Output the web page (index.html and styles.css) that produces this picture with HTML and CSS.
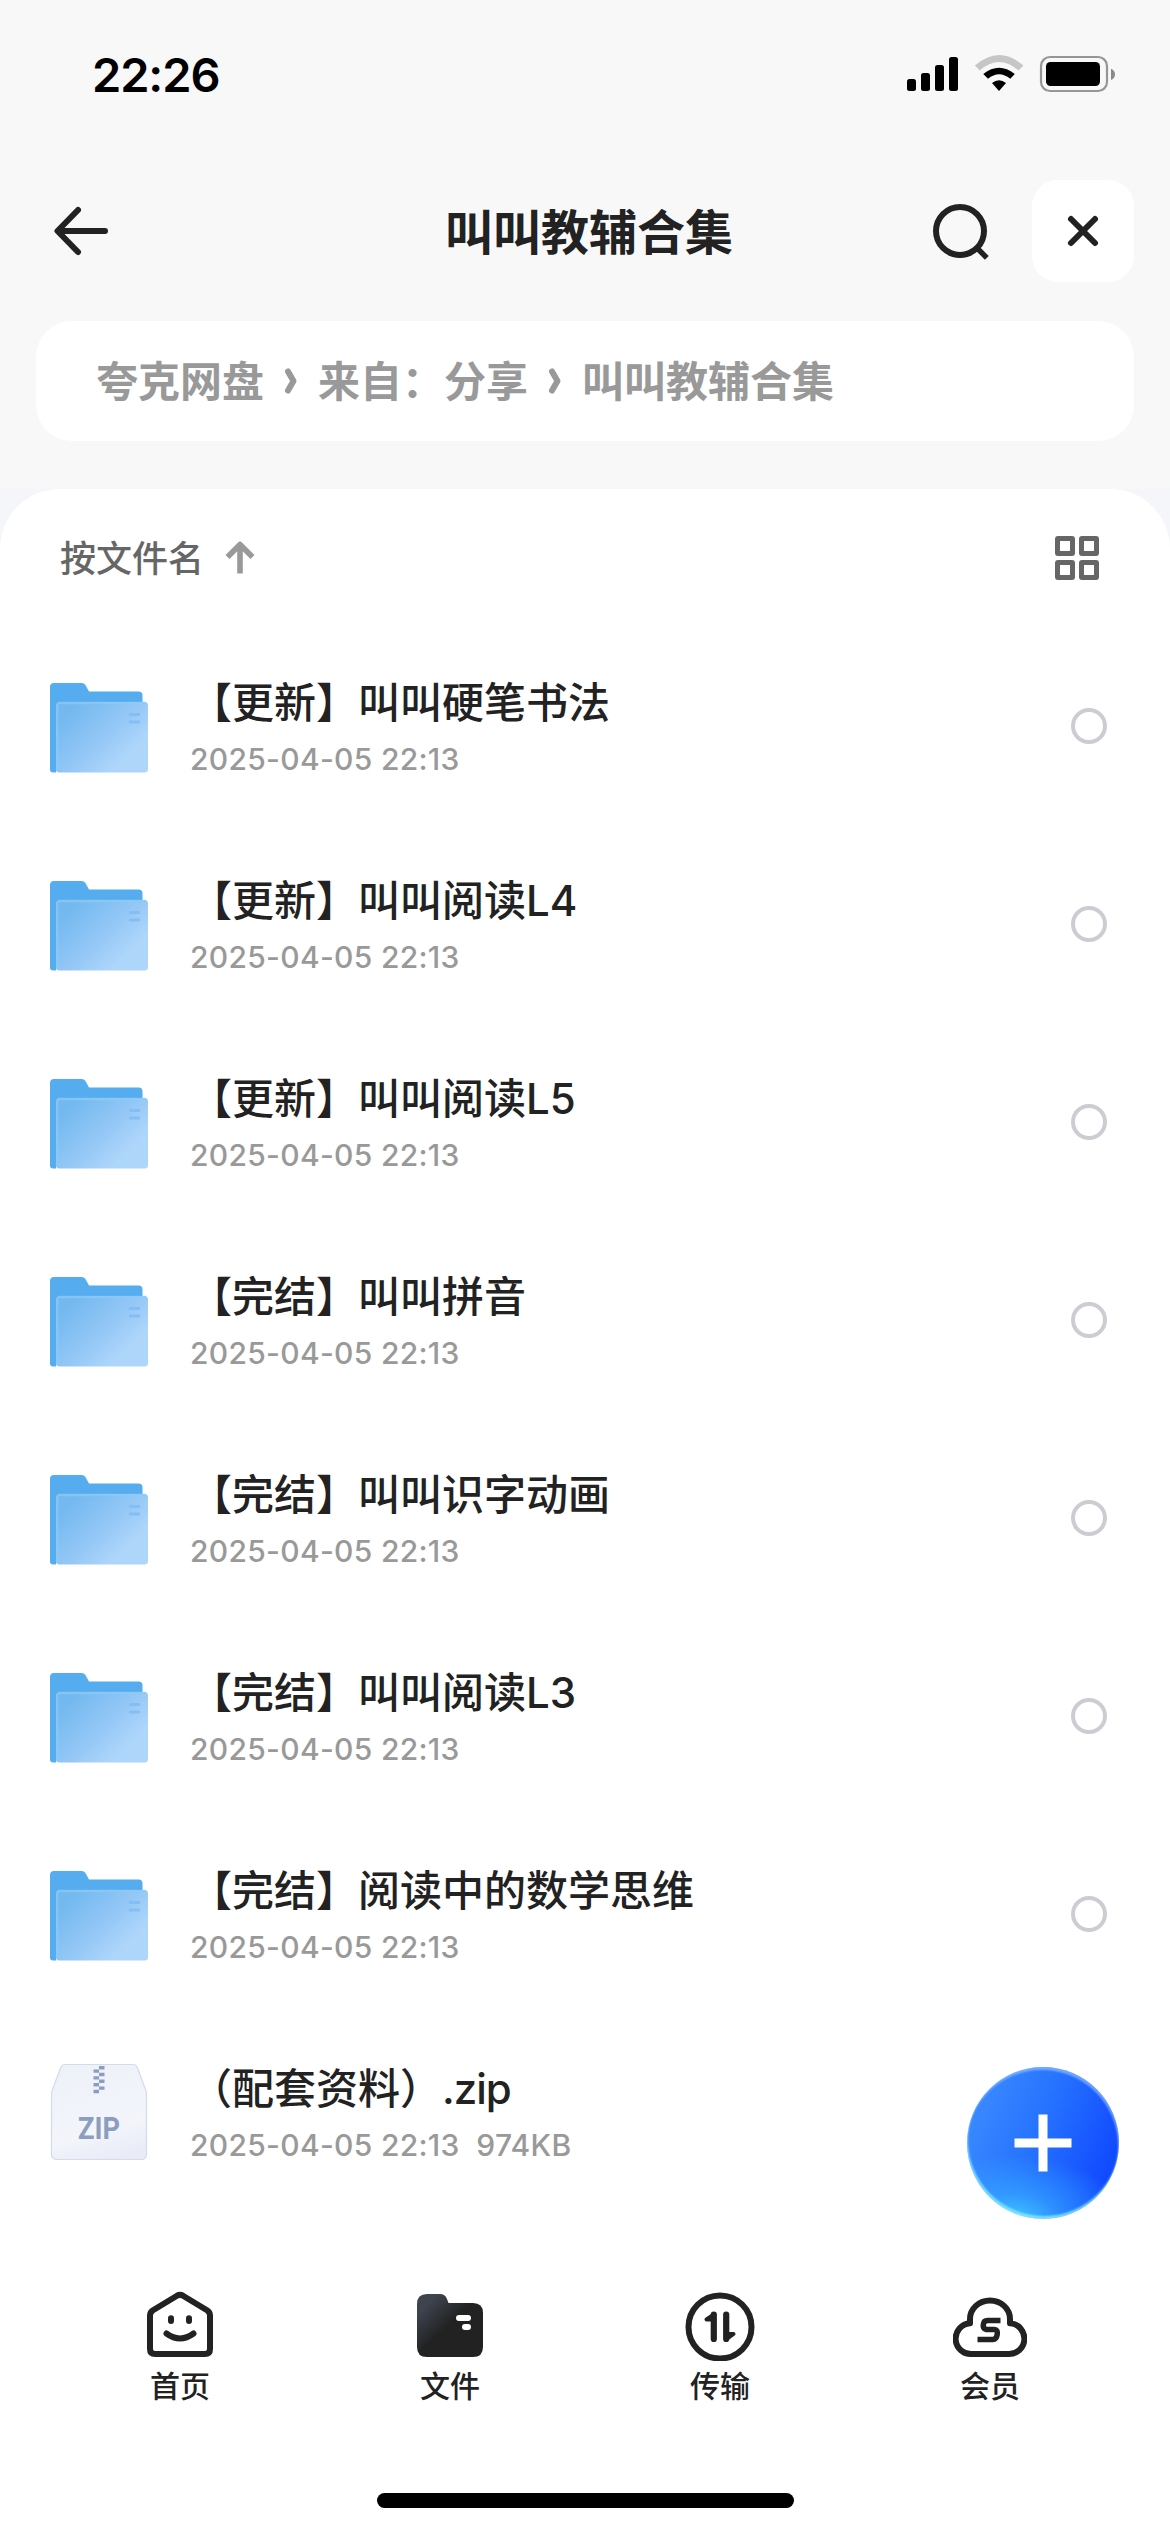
FILE: index.html
```html
<!DOCTYPE html>
<html lang="zh-CN">
<head>
<meta charset="utf-8">
<title>叫叫教辅合集</title>
<link rel="stylesheet" href="styles.css">
</head>
<body>
<svg width="0" height="0" class="defs" aria-hidden="true">
  <defs>
    <linearGradient id="folderFront" x1="0" y1="0.1" x2="1" y2="0.9">
      <stop offset="0.1" stop-color="#73b9ef"/><stop offset="0.5" stop-color="#93c7f6"/><stop offset="0.8" stop-color="#aed6fb"/>
    </linearGradient>
    <symbol id="folder" viewBox="0 0 98 90">
      <path d="M0 4a4 4 0 0 1 4-4h27.5q2.500 0 3.800 1.800L39 8.500H88.500a4 4 0 0 1 4 4V30H6V89.500H3a3 3 0 0 1-3-3z" fill="#55acef"/>
      <rect x="6" y="19" width="92" height="70.500" rx="3.500" fill="url(#folderFront)"/>
      <path d="M7.200 88V22.500a2.500 2.500 0 0 1 2.500-2.500H96" fill="none" stroke="#8fcaf5" stroke-width="2.400" opacity="0.7"/>
      <path d="M79 31.500h11M79 39h11" stroke="#83bff3" stroke-width="3.200"/>
    </symbol>
  </defs>
</svg>
<div class="screen">
  <div class="top">
    <div class="status">
      <span class="time">22:26</span>
      <svg class="status-icons" width="210" height="40" viewBox="0 0 210 40">
        <rect x="1" y="25" width="9" height="12" rx="2.500"/><rect x="15" y="19" width="9" height="18" rx="2.500"/><rect x="29" y="11" width="9" height="26" rx="2.500"/><rect x="43" y="3" width="9" height="34" rx="2.500"/>
        <path d="M69 11.500Q93-9.500 117.300 11.500L112.700 16.500Q93-.5 73.600 16.500z" fill="#c6c6c6"/>
        <path d="M77.300 20Q93 7.500 108.800 20L104.300 24.800Q93 15.500 82 24.800z"/>
        <path d="M86 29Q93 23.500 100 29L93 37z"/>
        <rect x="135" y="3" width="66" height="34" rx="9" fill="none" stroke="#969696" stroke-width="2.200"/>
        <rect x="140" y="8" width="54" height="24" rx="4.500"/>
        <path d="M205 14.700q4 1.500 4 5.600t-4 5.600z" fill="#8a8a8a"/>
      </svg>
    </div>
    <header class="bar">
      <svg class="back" width="60" height="60" viewBox="0 0 60 60"><path d="M57 30H10M30 9L9.500 30L30 51" fill="none" stroke="#222" stroke-width="6" stroke-linecap="round" stroke-linejoin="round"/></svg>
      <h1>叫叫教辅合集</h1>
      <div class="actions">
        <svg width="60" height="60" viewBox="0 0 60 60"><circle cx="30" cy="30" r="24" fill="none" stroke="#222" stroke-width="6"/><path d="M46.500 46.500L56.800 56.800" stroke="#222" stroke-width="5.400"/></svg>
        <button class="close"><svg width="36" height="36" viewBox="0 0 36 36"><path d="M6 6L30 30M30 6L6 30" stroke="#222" stroke-width="6" stroke-linecap="round"/></svg></button>
      </div>
    </header>
    <nav class="crumbs">
      <span>夸克网盘</span>
      <svg class="chev" viewBox="0 0 54 30"><path d="M24 5.500L29.500 15L24 24.500" /></svg>
      <span>来自：分享</span>
      <svg class="chev" viewBox="0 0 54 30"><path d="M24 5.500L29.500 15L24 24.500" /></svg>
      <span>叫叫教辅合集</span>
    </nav>
  </div>
  <div class="backdrop">
  <main class="panel">
    <div class="sort">
      <span>按文件名</span>
      <svg class="up" width="32" height="34" viewBox="0 0 32 34"><path d="M16 32.500V5M3.500 16L16 3.500L28.500 16" fill="none" stroke="#999" stroke-width="5.600" stroke-linejoin="round"/></svg>
      <svg class="grid" width="44" height="44" viewBox="0 0 44 44" fill="none" stroke="#666" stroke-width="5"><rect x="2.500" y="2.500" width="15" height="15" rx=".5"/><rect x="26.500" y="2.500" width="15" height="15" rx=".5"/><rect x="2.500" y="26.500" width="15" height="15" rx=".5"/><rect x="26.500" y="26.500" width="15" height="15" rx=".5"/></svg>
    </div>
    <ul class="files">
      <li><svg class="icon"><use href="#folder"/></svg><div class="info"><p class="name">【更新】叫叫硬笔书法</p><p class="meta">2025-04-05 22:13</p></div><i class="radio"></i></li>
      <li><svg class="icon"><use href="#folder"/></svg><div class="info"><p class="name">【更新】叫叫阅读L4</p><p class="meta">2025-04-05 22:13</p></div><i class="radio"></i></li>
      <li><svg class="icon"><use href="#folder"/></svg><div class="info"><p class="name">【更新】叫叫阅读L5</p><p class="meta">2025-04-05 22:13</p></div><i class="radio"></i></li>
      <li><svg class="icon"><use href="#folder"/></svg><div class="info"><p class="name">【完结】叫叫拼音</p><p class="meta">2025-04-05 22:13</p></div><i class="radio"></i></li>
      <li><svg class="icon"><use href="#folder"/></svg><div class="info"><p class="name">【完结】叫叫识字动画</p><p class="meta">2025-04-05 22:13</p></div><i class="radio"></i></li>
      <li><svg class="icon"><use href="#folder"/></svg><div class="info"><p class="name">【完结】叫叫阅读L3</p><p class="meta">2025-04-05 22:13</p></div><i class="radio"></i></li>
      <li><svg class="icon"><use href="#folder"/></svg><div class="info"><p class="name">【完结】阅读中的数学思维</p><p class="meta">2025-04-05 22:13</p></div><i class="radio"></i></li>
      <li>
        <svg class="icon zip" viewBox="0 0 98 98">
          <defs><linearGradient id="zipBody" x1="0.3" y1="0" x2="0.6" y2="1"><stop offset="0" stop-color="#edf1f8"/><stop offset="0.7" stop-color="#f3f5fb"/><stop offset="1" stop-color="#e9ebf7"/></linearGradient></defs>
          <path d="M15 1.500H83q3.500 0 4.500 3.500L96 28q.5 1.500.5 3V91.500a5 5 0 0 1-5 5H6.500a5 5 0 0 1-5-5V31q0-1.500.5-3L10.500 5Q11.500 1.500 15 1.500z" fill="url(#zipBody)" stroke="#d4dbea" stroke-width="1.200"/>
          <path d="M49 3h5.500v3.400H49zM43.500 6.400H49v3.400h-5.500zM49 9.800h5.500v3.400H49zM43.500 13.200H49v3.400h-5.500zM49 16.600h5.500V20H49zM43.500 20H49v3.400h-5.500zM49 23.400h5.500v3.400H49zM43.500 26.800H49v3.400h-5.500z" fill="#8d9dc0"/>
          <text x="28" y="76" font-size="32" textLength="42" lengthAdjust="spacingAndGlyphs">ZIP</text>
        </svg>
        <div class="info"><p class="name">（配套资料）<span class="ext">.zip</span></p><p class="meta">2025-04-05 22:13&nbsp; 974KB</p></div>
      </li>
    </ul>
  </main>
  </div>
  <button class="fab"><svg width="60" height="60" viewBox="0 0 60 60"><path d="M30 1.500V58.500M1.500 30H58.500" stroke="#fff" stroke-width="9"/></svg></button>
  <nav class="tabs">
    <a><svg width="72" height="72" viewBox="0 0 72 72" fill="none" stroke="#222" stroke-width="6" stroke-linecap="round" stroke-linejoin="round"><path d="M33 6.700Q36 5 39 6.700L63 21.300Q66 23.300 66 26.500V60Q66 65 61 65H11Q6 65 6 60V26.500Q6 23.300 9 21.300z"/><path d="M27 29.200v2.800M45 29.200v2.800M22.500 44.500Q36 54.500 49.500 44.500"/></svg><span>首页</span></a>
    <a><svg width="72" height="72" viewBox="0 0 72 72"><defs><linearGradient id="tabFolder" x1="0.080" y1="0.080" x2="0.620" y2="0.620"><stop offset="0.150" stop-color="#3d444e"/><stop offset="0.750" stop-color="#222"/></linearGradient></defs><path d="M3 15Q3 5 13 5H26Q31 5 33 10L34.500 14H59Q69 14 69 24V58Q69 68 59 68H13Q3 68 3 58z" fill="url(#tabFolder)"/><path d="M45 29h9M51 38h3" stroke="#fff" stroke-width="6" stroke-linecap="round"/></svg><span>文件</span></a>
    <a><svg width="72" height="72" viewBox="0 0 72 72"><circle cx="36" cy="38" r="31.500" fill="none" stroke="#222" stroke-width="6"/><path d="M29.800 25.500V50M42.200 25.500V50" stroke="#222" stroke-width="6.200" stroke-linecap="round" fill="none"/><path d="M30 25.500L22.500 30.500H30zM42 50.500L49.500 45H42z" fill="#222" stroke="#222" stroke-width="4" stroke-linejoin="round"/></svg><span>传输</span></a>
    <a><svg width="74" height="72" viewBox="-1 0 74 72" fill="none"><path d="M18 65H54A15 15 0 0 0 56 34.300V30A20 18.500 0 0 0 16 30V34.300A15 15 0 0 0 18 65z" stroke="#222" stroke-width="6" stroke-linejoin="round"/><path d="M46.500 31.500H33.500Q29.800 31.500 29.300 35.500T32 40.500H40.500Q44 40.500 43.200 45.500T39 50.500H23.500" stroke="#222" stroke-width="5.500"/></svg><span>会员</span></a>
  </nav>
  <div class="home"></div>
</div>
</body>
</html>
```
FILE: styles.css
```css
* { box-sizing: border-box; margin: 0; padding: 0; }
body { width: 1170px; height: 2532px; background: #fff; font-family: Inter, "Noto Sans CJK SC", sans-serif; color: #222; overflow: hidden; }
svg { display: block; flex: none; }
.defs { position: absolute; }
button { border: 0; }
.screen { position: relative; height: 2532px; display: flex; flex-direction: column; }
.top { height: 489px; background: #f8f8f8; padding: 0 36px; }
.status { height: 180px; padding: 54px 18px 0 56px; display: flex; justify-content: space-between; align-items: flex-start; }
.time { font-size: 47px; line-height: 42px; font-weight: 600; color: #000; letter-spacing: -1.1px; }
.bar { height: 102px; display: flex; align-items: center; justify-content: space-between; }
.back { margin-left: 12px; }
.bar h1 { font-size: 48px; line-height: 60px; font-weight: 700; width: 288px; margin-left: 337px; padding-top: 3px; white-space: nowrap; }
.actions { display: flex; align-items: center; gap: 42px; margin-left: auto; }
.close { width: 102px; height: 102px; border-radius: 26px; background: #fff; display: flex; align-items: center; justify-content: center; }
.crumbs { margin-top: 39px; height: 120px; border-radius: 36px; background: #fff; padding-left: 60px; display: flex; align-items: center; font-size: 42px; font-weight: 600; color: #999; white-space: nowrap; }
.crumbs span { padding-bottom: 5px; }
.chev { width: 54px; height: 30px; fill: none; stroke: #999; stroke-width: 6; stroke-linecap: round; stroke-linejoin: round; }
.backdrop { background: #f5f6f9; }
.panel { height: 1743px; background: #fff; border-radius: 60px 60px 0 0; }
.sort { height: 138px; padding: 0 71px 0 60px; display: flex; align-items: center; font-size: 36px; font-weight: 500; color: #666; }
.sort span { padding-bottom: 5px; }
.up { margin-left: 20px; }
.grid { margin-left: auto; }
.files { list-style: none; }
.files li { height: 198px; padding: 0 63px 0 50px; display: flex; align-items: center; }
.icon { width: 98px; height: 90px; margin-top: 3px; }
.icon.zip { height: 98px; margin-top: 0; }
.zip text { font-family: Roboto, sans-serif; font-weight: 700; fill: #8d9dc0; }
.info { margin-left: 42px; }
.name { font-size: 42px; line-height: 60px; font-weight: 500; white-space: nowrap; }
.ext { letter-spacing: -1px; }
.meta { font-size: 30px; line-height: 40px; margin-top: 6px; color: #999; font-weight: 500; letter-spacing: 0.3px; white-space: nowrap; }
.radio { width: 36px; height: 36px; border: 4px solid #ccccd2; border-radius: 50%; margin-left: auto; }
.fab { position: absolute; left: 967px; top: 2067px; width: 152px; height: 152px; border-radius: 50%; display: flex; align-items: center; justify-content: center; background: radial-gradient(ellipse 75% 42% at 30% 100%, #41c4ff 0, rgba(56,175,255,.6) 40%, rgba(40,130,255,0) 100%), linear-gradient(112deg, #3a88ff 12%, #2673ff 45%, #1048ff 88%); box-shadow: inset -1px 3px 2px rgba(150,195,255,.65), inset 1px -3px 2px rgba(140,240,255,.75); }
.tabs { height: 261px; padding: 57px 45px 0; display: flex; }
.tabs a { width: 270px; display: flex; flex-direction: column; align-items: center; }
.tabs span { font-size: 30px; line-height: 40px; font-weight: 500; margin-top: 5px; }
.home { width: 417px; height: 15px; border-radius: 8px; background: #000; margin: 0 auto; }
```
